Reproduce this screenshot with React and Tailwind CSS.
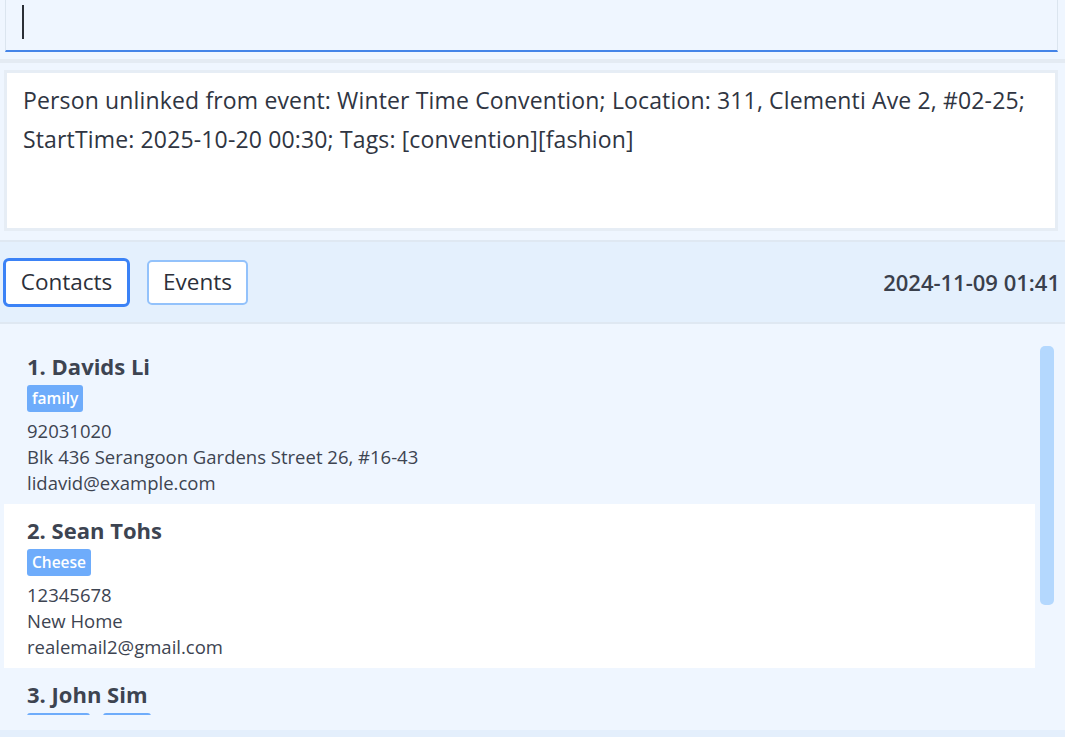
import React from 'react';

const contacts = [
  {
    name: '1. Davids Li',
    tags: ['family'],
    phone: '92031020',
    address: 'Blk 436 Serangoon Gardens Street 26, #16-43',
    email: 'lidavid@example.com',
  },
  {
    name: '2. Sean Tohs',
    tags: ['Cheese'],
    phone: '12345678',
    address: 'New Home',
    email: 'realemail2@gmail.com',
  },
  {
    name: '3. John Sim',
    tags: ['friends', 'owes'],
    phone: '87438807',
    address: 'Blk 30 Geylang Street 29, #06-40',
    email: 'johnsim@example.com',
  },
];

const ContactCard = ({ person, index }) => (
  <div className={`pl-[23px] pt-[11px] pb-[8px] ${index % 2 === 1 ? 'bg-white' : 'bg-[#eff6ff]'}`}>
    <div className="text-[22px] leading-[30px] font-bold text-[#3d4451]">{person.name}</div>
    <div className="flex gap-[13px] mt-[4px]">
      {person.tags.map(t => (
        <span
          key={t}
          className="h-[27px] px-[5px] rounded-[3px] bg-[#6eacfb] text-white text-[15.5px] leading-[27px] font-semibold"
        >
          {t}
        </span>
      ))}
    </div>
    <div className="mt-[6px] text-[18.5px] leading-[26px] text-[#3d4451]">
      <div>{person.phone}</div>
      <div>{person.address}</div>
      <div>{person.email}</div>
    </div>
  </div>
);

export default function App() {
  return (
    <div className="w-[1065px] h-[737px] bg-[#eff6ff] flex flex-col overflow-hidden font-['Open_Sans',sans-serif]">
      {/* Command box */}
      <div className="pl-[5px] pr-[7px] pb-[7px]">
        <div className="h-[52px] border-x border-[#dbe5ef] border-b-2 border-b-[#4484e8] flex items-center pl-[16px]">
          <div className="w-[2px] h-[34px] bg-[#2b2f36] mt-[-6px]" />
        </div>
      </div>
      <div className="h-[4px] bg-[#e4ebf3]" />

      {/* Result display */}
      <div className="pl-[4px] pr-[7px] pt-[7px] pb-[9px]">
        <div className="h-[161px] border-[3px] border-[#e6edf5] bg-white pl-[16px] pr-[10px] pt-[8px]">
          <p className="text-[23px] leading-[39px] tracking-[0.15px] text-[#2f3542]">
            Person unlinked from event: Winter Time Convention; Location: 311, Clementi Ave 2, #02-25; StartTime: 2025-10-20 00:30; Tags: [convention][fashion]
          </p>
        </div>
      </div>

      {/* Toolbar */}
      <div className="h-[84px] bg-[#e4f0fd] border-y-2 border-[#dfe8f2] flex items-center pl-[3px] pr-[5px]">
        <button className="h-[49px] w-[127px] rounded-[6px] border-[3px] border-[#3b82f6] bg-white text-[22.5px] text-[#2b303a]">
          Contacts
        </button>
        <button className="ml-[17px] h-[45px] w-[101px] rounded-[5px] border-2 border-[#93c2fb] bg-white text-[22.5px] text-[#2b303a]">
          Events
        </button>
        <div className="ml-auto text-[22px] font-semibold text-[#3a404c]">2024-11-09 01:41</div>
      </div>

      {/* Contact list */}
      <div className="flex-1 flex min-h-0 pb-[15px]">
        <div className="flex-1 min-h-0 overflow-hidden pl-[4px] pt-[16px]">
          {contacts.map((p, i) => (
            <ContactCard key={p.name} person={p} index={i} />
          ))}
        </div>
        <div className="w-[30px] pl-[5px] pt-[22px]">
          <div className="w-[14px] h-[259px] rounded-[5px] bg-[#b4d8fe]" />
        </div>
      </div>
      <div className="h-[7px] bg-[#e4effc]" />
    </div>
  );
}
